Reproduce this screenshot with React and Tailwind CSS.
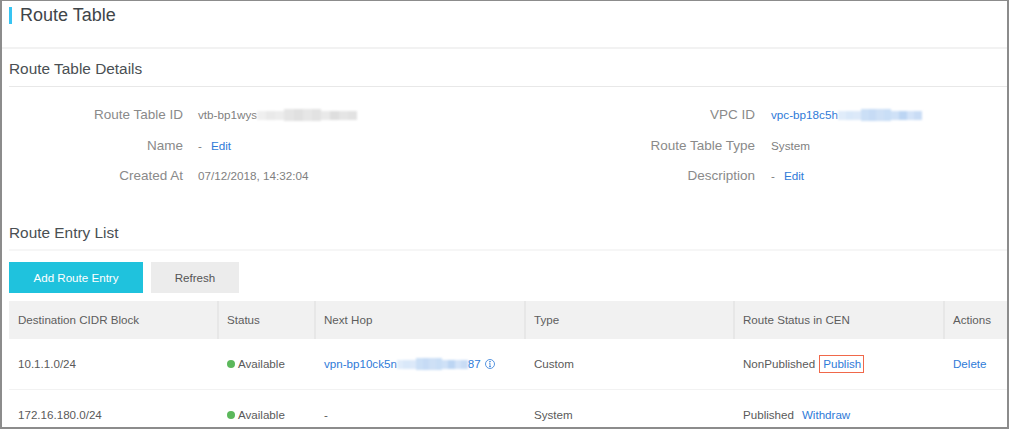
import React from "react";

function Blur({ width, colors }) {
  return (
    <span className="inline-flex items-center blur-[1px] align-middle" style={{ width }}>
      {colors.map((c, i) => (
        <span key={i} className="flex-1" style={{ background: c, height: i >= 3 && i <= 6 ? 12 : 9 }} />
      ))}
    </span>
  );
}

const grayBlur = ["#efefef", "#e9e9e9", "#ececec", "#e4e4e4", "#e0e0e0", "#e6e6e6", "#e2e2e2", "#e9e9e9", "#dedede", "#e5e5e5", "#e2e2e2"];
const blueBlur = ["#e0ecfa", "#d9e8f9", "#dce9f9", "#cbdff6", "#c6dbf5", "#cee0f6", "#c9def6", "#cfe1f7", "#bcd5f3", "#d3e3f8", "#c9dcf5"];

function Row({ label, children, gap }) {
  return (
    <div className="flex items-center h-[30.5px]">
      <div className="w-[174px] text-right text-[13.5px] text-[#8a8a8a] shrink-0">{label}</div>
      <div className={`${gap} text-[11.7px] text-[#7f7f7f] flex items-center whitespace-pre`}>{children}</div>
    </div>
  );
}

function Link({ children, className = "" }) {
  return <span className={`text-[#2f7bd8] ${className}`}>{children}</span>;
}

const cols = ["w-[210px] pl-[9px]", "w-[97px] pl-[8px]", "w-[210px] pl-[8px]", "w-[209px] pl-[8px]", "w-[210px] pl-[8px]", "flex-1 pl-[8px]"];

function HeadCell({ children, i }) {
  return (
    <div className={`${cols[i]} h-full flex items-center ${i < 5 ? "border-r-2 border-[#e7e7e7]" : ""}`}>
      {children}
    </div>
  );
}

function Cell({ children, i }) {
  return <div className={`${cols[i]} flex items-center whitespace-pre`}>{children}</div>;
}

function Dot() {
  return <span className="w-[8px] h-[8px] rounded-full bg-[#5cb85c] mr-[3px]" />;
}

export default function App() {
  return (
    <div className="w-[1009px] h-[429px] overflow-hidden bg-white border-t border-l-2 border-r-2 border-b-2 border-[#8c8c8c] font-['Liberation_Sans',sans-serif]">
      <header className="h-[46px] pl-[7px] pt-[6px] flex items-start">
        <div className="w-[3px] h-[17px] bg-[#38c4f2]" />
        <h1 className="ml-[8px] text-[18px] leading-[17px] text-[#3f4549]">Route Table</h1>
      </header>
      <div className="h-[2px] bg-[#f2f2f2]" />

      <section className="pl-[7px]">
        <h2 className="h-[38px] flex items-center text-[15.4px] text-[#4a4f53] border-b border-[#e8e8e8] pt-[3px]">Route Table Details</h2>
        <div className="flex pt-[13px] h-[129px]">
          <div className="w-[572px]">
            <Row label="Route Table ID" gap="ml-[15px]">
              vtb-bp1wys<Blur width={100} colors={grayBlur} />
            </Row>
            <Row label="Name" gap="ml-[15px]">
              -<Link className="ml-[9px]">Edit</Link>
            </Row>
            <Row label="Created At" gap="ml-[15px]">07/12/2018, 14:32:04</Row>
          </div>
          <div className="flex-1">
            <Row label="VPC ID" gap="ml-[16px]">
              <Link>vpc-bp18c5h</Link><Blur width={84} colors={blueBlur} />
            </Row>
            <Row label="Route Table Type" gap="ml-[16px]">System</Row>
            <Row label="Description" gap="ml-[16px]">
              -<Link className="ml-[9px]">Edit</Link>
            </Row>
          </div>
        </div>

        <h2 className="h-[35px] flex items-center text-[15.4px] text-[#4a4f53] border-b-2 border-[#f6f6f6]">Route Entry List</h2>

        <div className="flex gap-[8px] mt-[11px]">
          <button className="w-[134px] h-[31px] bg-[#1fc2dd] text-white text-[11.6px]">Add Route Entry</button>
          <button className="w-[88px] h-[31px] bg-[#ececec] text-[#555] text-[11.6px]">Refresh</button>
        </div>

        <div className="mt-[8px] text-[11.6px]">
          <div className="flex h-[38px] bg-[#f1f1f1] text-[#5d5d5d]">
            {["Destination CIDR Block", "Status", "Next Hop", "Type", "Route Status in CEN", "Actions"].map((t, i) => (
              <HeadCell key={t} i={i}>{t}</HeadCell>
            ))}
          </div>
          <div className="flex h-[51px] border-b border-[#f2f2f2] text-[#5a5a5a]">
            <Cell i={0}>10.1.1.0/24</Cell>
            <Cell i={1}><Dot />Available</Cell>
            <Cell i={2}>
              <Link>vpn-bp10ck5n</Link>
              <Blur width={71} colors={blueBlur} />
              <Link>87</Link>
              <svg className="ml-[4px]" width="10" height="10" viewBox="0 0 10 10" fill="none" stroke="#2f7bd8" strokeWidth="0.8">
                <circle cx="5" cy="5" r="4.5" />
                <path d="M5 4.2V7.6M4 7.6H6M4.2 4.2H5" />
                <circle cx="5" cy="2.7" r="0.4" fill="#2f7bd8" />
              </svg>
            </Cell>
            <Cell i={3}>Custom</Cell>
            <Cell i={4}>
              NonPublished
              <span className="ml-[4px] border border-[#f0684a] h-[18px] pl-[3px] pr-[2px] flex items-center text-[#2f7bd8]">Publish</span>
            </Cell>
            <Cell i={5}><Link>Delete</Link></Cell>
          </div>
          <div className="flex h-[50px] text-[#5a5a5a]">
            <Cell i={0}>172.16.180.0/24</Cell>
            <Cell i={1}><Dot />Available</Cell>
            <Cell i={2}>-</Cell>
            <Cell i={3}>System</Cell>
            <Cell i={4}>Published<Link className="ml-[8px]">Withdraw</Link></Cell>
            <Cell i={5}></Cell>
          </div>
        </div>
      </section>
    </div>
  );
}
